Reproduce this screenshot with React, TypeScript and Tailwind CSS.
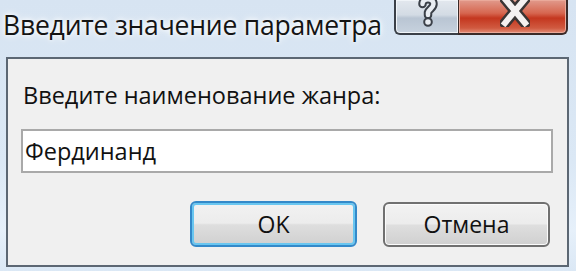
import React from "react";

const font = { fontFamily: '"Open Sans", "Noto Sans", sans-serif' };

function HelpGlyph() {
  return (
    <svg width="20" height="32" viewBox="0 0 20 32" className="absolute left-[22px] top-[-5px]">
      <path
        d="M4.5 9 C4.5 2.5 15.5 2.5 15.5 9 C15.5 13 11 14 10 17.5 L10 20"
        fill="none"
        stroke="#3b4048"
        strokeWidth="8.5"
        strokeLinecap="round"
      />
      <path
        d="M4.5 9 C4.5 2.5 15.5 2.5 15.5 9 C15.5 13 11 14 10 17.5 L10 20"
        fill="none"
        stroke="#e9edf2"
        strokeWidth="4.5"
        strokeLinecap="round"
      />
      <circle cx="10" cy="27" r="3.8" fill="#e9edf2" stroke="#3b4048" strokeWidth="2" />
    </svg>
  );
}

function CloseGlyph() {
  return (
    <svg width="30" height="32" viewBox="0 0 30 32" className="absolute left-[41px] top-[-5px]">
      <path d="M5 4 L25 28 M25 4 L5 28" stroke="#3a3434" strokeWidth="11" strokeLinecap="square" />
      <path d="M5 4 L25 28 M25 4 L5 28" stroke="#f4f0f0" strokeWidth="6" strokeLinecap="square" />
    </svg>
  );
}

export default function App() {
  return (
    <div
      className="w-[576px] h-[271px] overflow-hidden flex flex-col bg-[linear-gradient(to_bottom,#d7e4f2_0%,#dbe8f5_60%,#e6f0fa_85%,#dbe8f5_100%)]"
      style={font}
    >
      {/* Title bar */}
      <div className="h-[57px] flex items-start shrink-0">
        <div className="pl-[3px] pt-[8px] text-[26.5px] leading-[34px] text-[#141414] tracking-[-0.2px] [text-shadow:0_0_8px_#ffffff,0_0_4px_#ffffff]">
          Введите значение параметра
        </div>
        <div className="ml-auto mr-[8px] flex">
          <div className="relative w-[64px] h-[35px] rounded-bl-[6px] border-l-[2px] border-b-[2px] border-[#3a3f47] bg-[linear-gradient(to_bottom,#e3e8ee_0%,#d3dbe4_45%,#b9c5d3_55%,#c7d2de_100%)] shadow-[inset_0_0_0_1px_#f0f4f8]">
            <HelpGlyph />
          </div>
          <div className="relative w-[110px] h-[35px] rounded-br-[6px] border-r-[2px] border-b-[2px] border-l-[1px] border-[#3a2a28] bg-[linear-gradient(to_bottom,#e19a8c_0%,#d6664f_40%,#c4371f_55%,#d05a40_85%,#e38d78_100%)] shadow-[inset_0_0_0_1px_#eaa99a]">
            <CloseGlyph />
          </div>
        </div>
      </div>

      {/* Client area */}
      <div className="ml-[6px] mr-[7px] mb-[4px] flex-1 border-[2px] border-[#5c6773] bg-[#f0f0f0] flex flex-col pl-[13px] pr-[14px]">
        <div className="pt-[20px] pl-[2px] text-[23.5px] leading-[32px] text-[#111111]">
          Введите наименование жанра:
        </div>
        <div className="mt-[18px] h-[44px] w-[532px] border-[2px] border-[#a9a9a9] bg-white flex items-center pl-[2px]">
          <span className="text-[23.5px] leading-[32px] text-[#111111]">Фердинанд</span>
        </div>
        <div className="mt-[28px] flex justify-end pr-[3px] gap-[26px]">
          <div className="w-[167px] h-[46px] rounded-[6px] border-[2px] border-[#3489c9] shadow-[inset_0_0_0_2px_#69c6f0] bg-[linear-gradient(to_bottom,#f2f2f2_0%,#ececec_48%,#dedede_52%,#d0d0d0_100%)] flex items-center justify-center text-[23px] text-[#111111]">
            OK
          </div>
          <div className="w-[167px] h-[45px] mt-[1px] rounded-[6px] border-[2px] border-[#707070] shadow-[inset_0_0_0_1px_#fbfbfb] bg-[linear-gradient(to_bottom,#f2f2f2_0%,#ececec_48%,#dedede_52%,#d0d0d0_100%)] flex items-center justify-center text-[23px] text-[#111111]">
            Отмена
          </div>
        </div>
      </div>
    </div>
  );
}
